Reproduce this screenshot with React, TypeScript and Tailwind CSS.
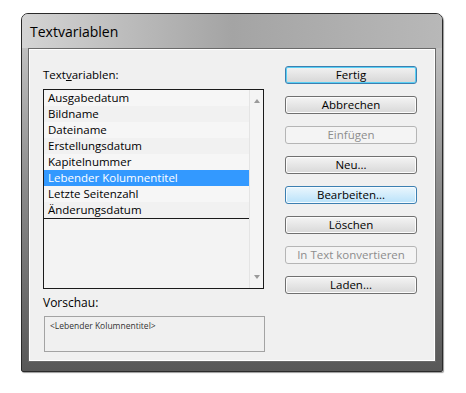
import React from 'react';

const ITEMS = [
  'Ausgabedatum',
  'Bildname',
  'Dateiname',
  'Erstellungsdatum',
  'Kapitelnummer',
  'Lebender Kolumnentitel',
  'Letzte Seitenzahl',
  'Änderungsdatum',
];

type BtnKind = 'default' | 'normal' | 'hover' | 'disabled';

const Btn: React.FC<{ label: string; kind?: BtnKind }> = ({ label, kind = 'normal' }) => {
  const styles: Record<BtnKind, string> = {
    default:
      'border-[#3c7fb1] bg-gradient-to-b from-[#f2f2f2] to-[#d6d6d6] text-black shadow-[inset_0_0_0_1px_#5ad0f4]',
    normal: 'border-[#707070] bg-gradient-to-b from-[#f4f4f4] to-[#d8d8d8] text-black shadow-[inset_0_0_0_1px_#fcfcfc]',
    hover: 'border-[#3c7fb1] bg-gradient-to-b from-[#eaf6fd] to-[#b9e2fa] text-black shadow-[inset_0_0_0_1px_#f4fbff]',
    disabled: 'border-[#b5b5b5] bg-[#f4f4f4] text-[#8d8d8d]',
  };
  return (
    <div
      className={`h-[18px] w-[132px] rounded-[3px] border flex items-center justify-center text-[11.5px] leading-none ${styles[kind]}`}
    >
      {label}
    </div>
  );
};

export default function App() {
  return (
    <div
      className="w-[466px] h-[393px] bg-white overflow-hidden"
      style={{ fontFamily: '"Open Sans", "Noto Sans", Arial, sans-serif' }}
    >
      <div className="ml-[21px] mt-[13px] w-[422px] h-[359px] rounded-t-[7px] rounded-b-[2px] border border-[#2a2a2a] bg-gradient-to-b from-[#cdcdcd] via-[#8a8a8a] to-[#585858] flex flex-col shadow-[1px_1px_1px_#999]">
        {/* title bar */}
        <div className="h-[34px] shrink-0 flex items-center pl-[8px] text-[14px] text-black rounded-t-[6px] bg-gradient-to-r from-[#d4d4d4] via-[#a4a4a4] to-[#b8b8b8]">
          Textvariablen
        </div>

        {/* client area */}
        <div className="mx-[6px] mb-[9px] flex-1 border border-[#6a6a6a] bg-[#f0f0f0] shadow-[inset_0_0_0_1px_#ffffff] flex pl-[14px] pt-[17px]">
          {/* left column */}
          <div className="w-[222px] flex flex-col">
            <div className="text-[11.5px] leading-none h-[23px] pt-[3px] text-black">
              Text<span className="underline">v</span>ariablen:
            </div>
            <div className="h-[200px] w-[221px] border border-[#1a1a1a] bg-[#f3f3f3] flex">
              <div className="w-[205px] flex flex-col">
                {ITEMS.map((it, i) => (
                  <div
                    key={it}
                    className={`h-[16px] pl-[4px] text-[11.5px] leading-[16px] ${
                      it === 'Lebender Kolumnentitel'
                        ? 'bg-[#3399ff] text-white'
                        : i % 2 === 0
                        ? 'bg-[#f6f6f6] text-black'
                        : 'bg-[#f1f1f1] text-black'
                    }`}
                  >
                    {it}
                  </div>
                ))}
                <div className="h-px bg-[#1a1a1a]" />
              </div>
              <div className="flex-1 border-l border-[#e4e4e4] bg-[#f4f4f4] flex flex-col items-center justify-between py-[9px]">
                <svg width="6" height="4" viewBox="0 0 6 4">
                  <path d="M0 4 L3 0 L6 4 Z" fill="#9a9a9a" />
                </svg>
                <svg width="6" height="4" viewBox="0 0 6 4">
                  <path d="M0 0 L3 4 L6 0 Z" fill="#9a9a9a" />
                </svg>
              </div>
            </div>
            <div className="text-[12px] leading-none pt-[8px] h-[27px] text-black">Vorschau:</div>
            <div className="h-[36px] w-[221px] ml-px border border-[#a3a3a3] bg-[#f0f0f0] pl-[5px] pt-[5px] text-[8.5px] leading-none text-[#333]">
              &lt;Lebender Kolumnentitel&gt;
            </div>
          </div>

          {/* right column */}
          <div className="ml-[20px] flex flex-col gap-[12px]">
            <Btn label="Fertig" kind="default" />
            <Btn label="Abbrechen" />
            <Btn label="Einfügen" kind="disabled" />
            <Btn label="Neu..." />
            <Btn label="Bearbeiten..." kind="hover" />
            <Btn label="Löschen" />
            <Btn label="In Text konvertieren" kind="disabled" />
            <Btn label="Laden..." />
          </div>
        </div>
      </div>
    </div>
  );
}
